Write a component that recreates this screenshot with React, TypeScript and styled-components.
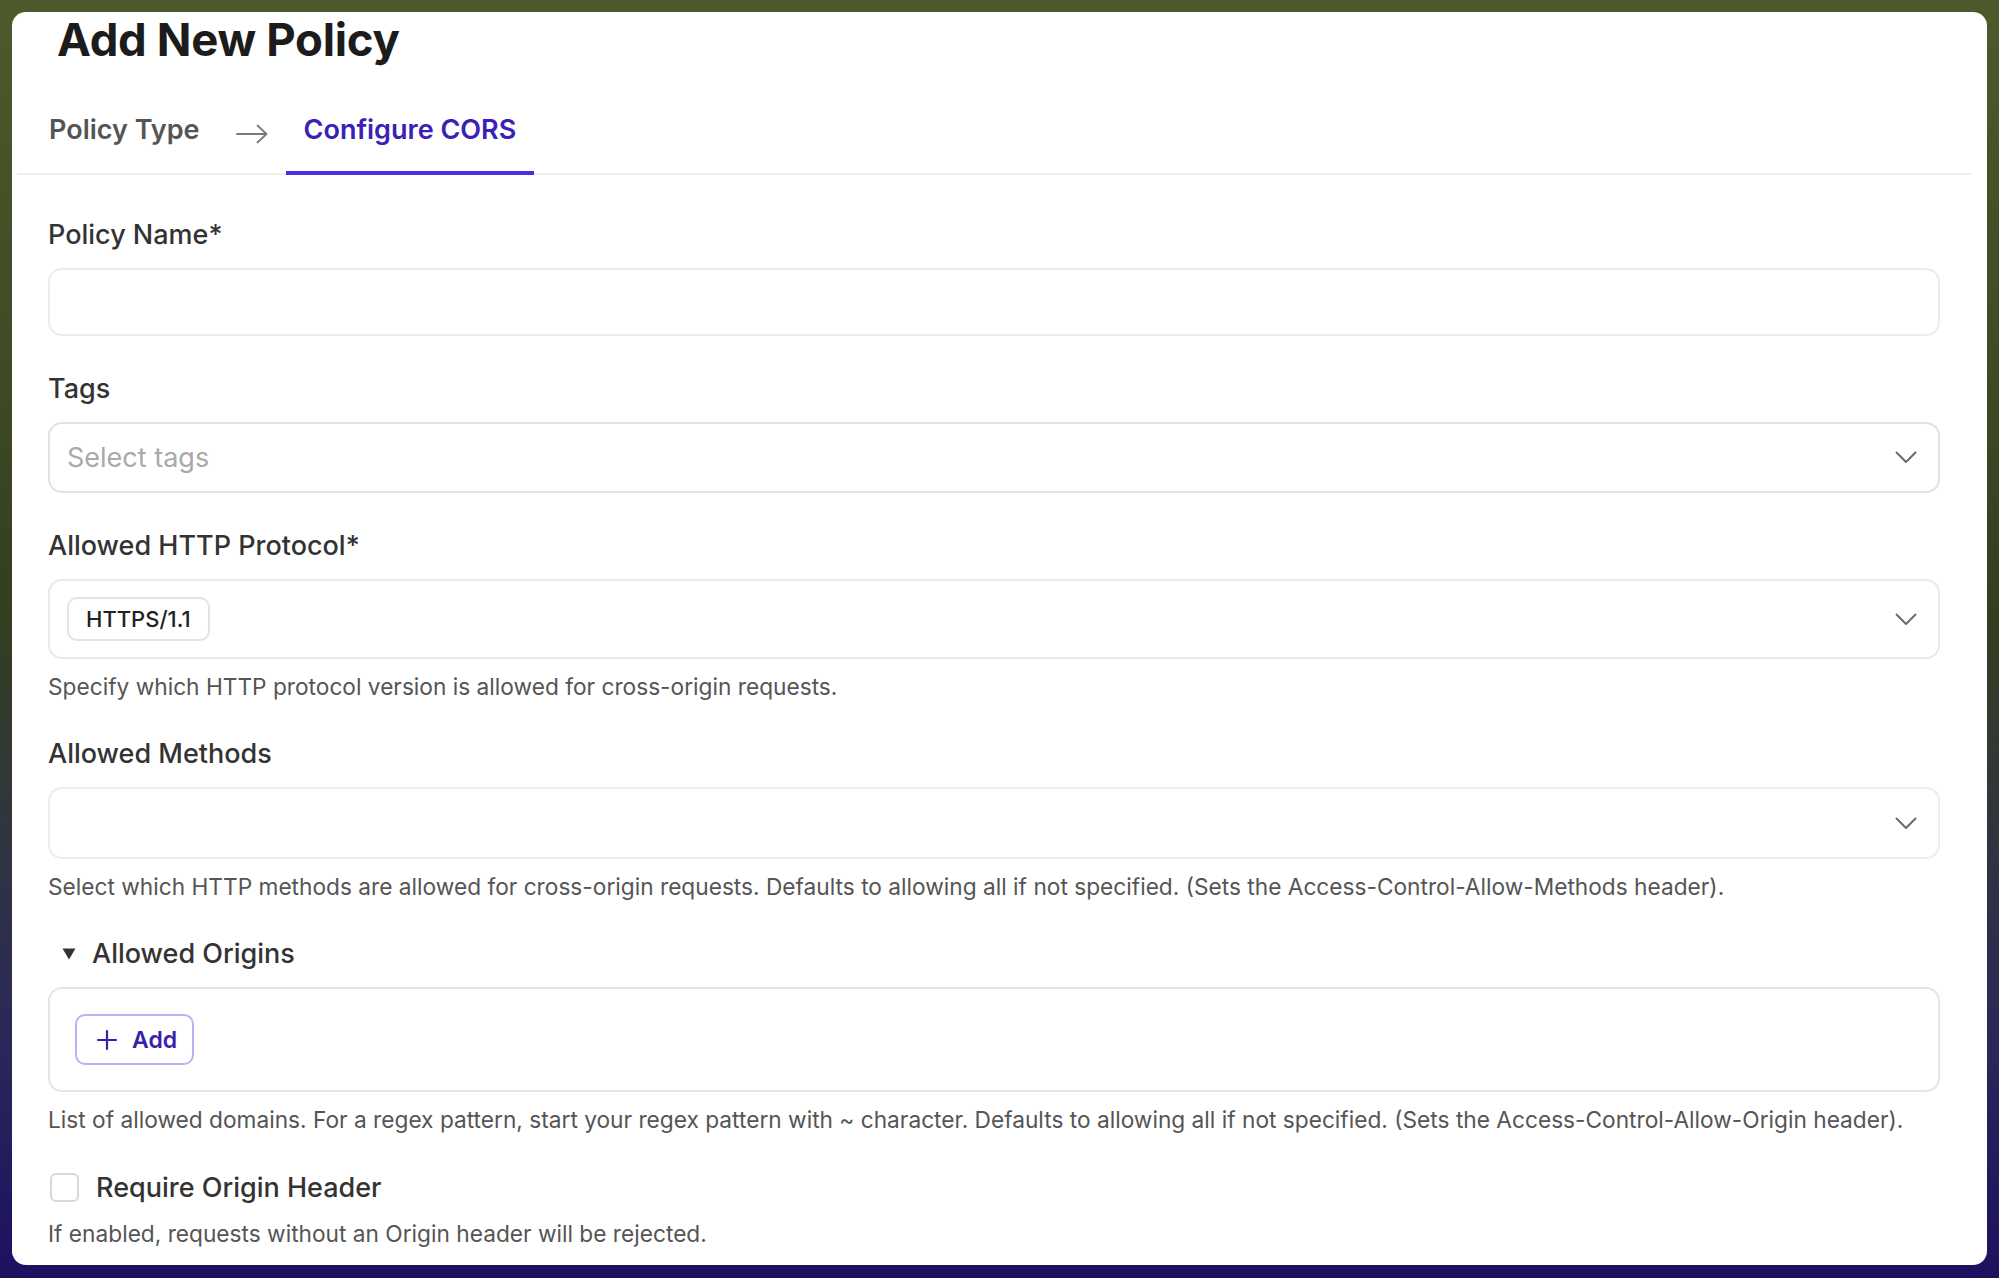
import React from 'react';
import styled, { createGlobalStyle } from 'styled-components';

const GlobalStyle = createGlobalStyle`
  * { box-sizing: border-box; }
  html, body { margin: 0; padding: 0; height: 100%; }
  body {
    font-family: Inter, "Noto Sans", "Liberation Sans", sans-serif;
    background: linear-gradient(180deg, #4d5a2c 0%, #3d4a24 30%, #323f20 48%, #2f3540 66%, #29275a 82%, #1c1160 100%);
    -webkit-font-smoothing: antialiased;
  }
  #root { height: 100%; }
`;

const Frame = styled.div`
  height: 100vh;
  padding: 12px 12px 13px 12px;
  display: flex;
`;

const Card = styled.main`
  flex: 1;
  background: #ffffff;
  border-radius: 14px;
  overflow: hidden;
  display: flex;
  flex-direction: column;
`;

const Title = styled.h1`
  margin: 0 0 35px 0;
  padding-left: 45px;
  font-size: 45.5px;
  line-height: 55px;
  font-weight: 700;
  color: #1c1c1c;
  letter-spacing: -0.3px;
`;

const TabBar = styled.nav`
  display: flex;
  align-items: center;
  gap: 18px;
  margin: 0 15px 0 5px;
  padding-left: 14px;
  border-bottom: 2px solid #efefef;
`;

const Tab = styled.div<{ $active?: boolean }>`
  padding: 12px 18px 25px 18px;
  margin-bottom: -2px;
  font-size: 27px;
  line-height: 32px;
  font-weight: 600;
  color: ${(p) => (p.$active ? '#3b20b8' : '#555555')};
  border-bottom: 4px solid ${(p) => (p.$active ? '#4a2fe0' : 'transparent')};
`;

const ArrowIcon = styled.svg`
  width: 32px;
  height: 20px;
  margin-bottom: 8px;
  flex: none;
`;

const Form = styled.form`
  display: flex;
  flex-direction: column;
  gap: 38px;
  padding: 45px 47px 0 36px;
`;

const Field = styled.div`
  display: flex;
  flex-direction: column;
`;

const Label = styled.label`
  font-size: 27px;
  line-height: 30px;
  font-weight: 500;
  color: #333333;
  margin-bottom: 18px;
`;

const SummaryRow = styled.div`
  display: flex;
  align-items: center;
  gap: 16px;
  padding-left: 14px;
  font-size: 27px;
  line-height: 30px;
  font-weight: 500;
  color: #333333;
  margin-bottom: 18px;
`;

const TextInput = styled.input<{ $h: number }>`
  height: ${(p) => p.$h}px;
  width: 100%;
  border: 2px solid #ececec;
  border-radius: 14px;
  padding: 0 17px;
  font-family: inherit;
  font-size: 27px;
  color: #222;
  background: #fff;
  outline: none;
`;

const SelectBox = styled.div<{ $h: number; $border?: string }>`
  height: ${(p) => p.$h}px;
  border: 2px solid ${(p) => p.$border || '#e9e9e9'};
  border-radius: 14px;
  padding: 0 21px 0 15px;
  display: flex;
  align-items: center;
  justify-content: space-between;
  background: #fff;
`;

const Placeholder = styled.span`
  font-size: 27px;
  color: #a9a9a9;
  padding-left: 2px;
`;

const Chip = styled.span`
  height: 44px;
  padding: 0 17px;
  margin-left: 2px;
  display: inline-flex;
  align-items: center;
  border: 2px solid #e3e3e3;
  border-radius: 10px;
  font-size: 22px;
  font-weight: 500;
  color: #222222;
`;

const Chevron = styled.svg`
  width: 22px;
  height: 13px;
  flex: none;
`;

const OriginsBox = styled.div`
  border: 2px solid #e6e6e6;
  border-radius: 14px;
  padding: 25px;
  display: flex;
`;

const AddButton = styled.button`
  height: 51px;
  display: inline-flex;
  align-items: center;
  gap: 14px;
  padding: 0 15px 0 19px;
  border: 2px solid #bcb1f3;
  border-radius: 10px;
  background: #ffffff;
  font-family: inherit;
  font-size: 23px;
  font-weight: 600;
  color: #3b1fae;
  cursor: pointer;
`;

const Help = styled.p<{ $mt?: number }>`
  margin: ${(p) => p.$mt ?? 14}px 0 0 0;
  font-size: 22.7px;
  line-height: 28px;
  color: #555555;
`;

const CheckRow = styled.label`
  display: flex;
  align-items: center;
  gap: 17px;
  height: 30px;
  padding-left: 2px;
  font-size: 27px;
  font-weight: 500;
  color: #333333;
`;

const CheckBox = styled.span`
  width: 29px;
  height: 29px;
  border: 2px solid #d8d8d8;
  border-radius: 6px;
  background: #fff;
  flex: none;
`;

const ChevronDown = () => (
  <Chevron viewBox="0 0 22 13" fill="none">
    <path d="M1.5 1.5 L11 11 L20.5 1.5" stroke="#6b6b6b" strokeWidth="2" strokeLinecap="round" strokeLinejoin="round" />
  </Chevron>
);

export default function App() {
  return (
    <>
      <GlobalStyle />
      <Frame>
        <Card>
          <Title>Add New Policy</Title>
          <TabBar>
            <Tab>Policy Type</Tab>
            <ArrowIcon viewBox="0 0 32 20" fill="none">
              <path d="M1 10 H30.5 M21.5 1.5 L30.5 10 L21.5 18.5" stroke="#7a7a7a" strokeWidth="1.8" strokeLinecap="round" strokeLinejoin="round" />
            </ArrowIcon>
            <Tab $active>Configure CORS</Tab>
          </TabBar>
          <Form onSubmit={(e) => e.preventDefault()}>
            <Field>
              <Label>Policy Name*</Label>
              <TextInput $h={68} />
            </Field>
            <Field>
              <Label>Tags</Label>
              <SelectBox $h={71} $border="#e2e2e2">
                <Placeholder>Select tags</Placeholder>
                <ChevronDown />
              </SelectBox>
            </Field>
            <Field>
              <Label>Allowed HTTP Protocol*</Label>
              <SelectBox $h={80}>
                <Chip>HTTPS/1.1</Chip>
                <ChevronDown />
              </SelectBox>
              <Help>Specify which HTTP protocol version is allowed for cross-origin requests.</Help>
            </Field>
            <Field>
              <Label>Allowed Methods</Label>
              <SelectBox $h={72} $border="#ededed">
                <span />
                <ChevronDown />
              </SelectBox>
              <Help>
                Select which HTTP methods are allowed for cross-origin requests. Defaults to allowing all if not specified. (Sets the Access-Control-Allow-Methods header).
              </Help>
            </Field>
            <Field>
              <SummaryRow>
                <svg width="14" height="12" viewBox="0 0 14 12">
                  <path d="M0.5 0.5 H13.5 L7 11.5 Z" fill="#333" />
                </svg>
                Allowed Origins
              </SummaryRow>
              <OriginsBox>
                <AddButton type="button">
                  <svg width="22" height="22" viewBox="0 0 22 22" fill="none">
                    <path d="M11 2 V20 M2 11 H20" stroke="#3b1fae" strokeWidth="2.2" strokeLinecap="round" />
                  </svg>
                  Add
                </AddButton>
              </OriginsBox>
              <Help>
                List of allowed domains. For a regex pattern, start your regex pattern with ~ character. Defaults to allowing all if not specified. (Sets the Access-Control-Allow-Origin header).
              </Help>
            </Field>
            <Field>
              <CheckRow>
                <CheckBox />
                Require Origin Header
              </CheckRow>
              <Help $mt={18}>If enabled, requests without an Origin header will be rejected.</Help>
            </Field>
          </Form>
        </Card>
      </Frame>
    </>
  );
}
